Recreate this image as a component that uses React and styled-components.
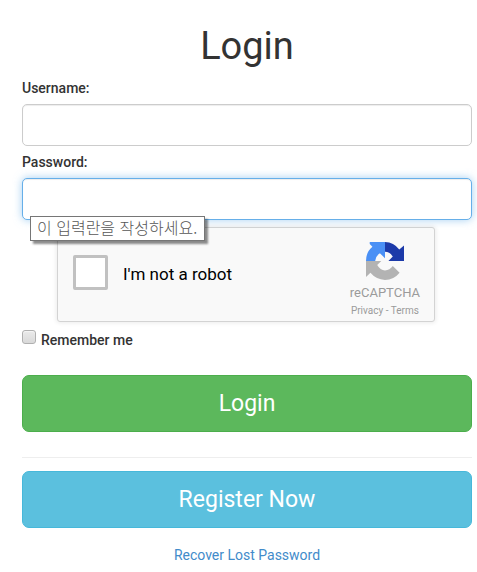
import React from 'react';
import styled, { createGlobalStyle } from 'styled-components';

const GlobalStyle = createGlobalStyle`
    * {
        box-sizing: border-box;
    }
    body {
        margin: 0;
        background-color: #fff;
        color: #333;
        font-family: Roboto, 'Liberation Sans', sans-serif;
        font-size: 14px;
        line-height: 20px;
    }
`
const Form = styled.form`
    padding: 25px 5px 7px 22px;
`
const Title = styled.h1`
    margin: 0 0 11px;
    font-size: 38px;
    font-weight: 400;
    line-height: 42px;
    text-align: center;
`
const Field = styled.div`
    position: relative;
    display: flex;
    flex-direction: column;
    gap: 6px;
    margin-bottom: 6px;
`
const Label = styled.label`
    font-weight: 500;
`
const Input = styled.input`
    width: 100%;
    height: 42px;
    padding: 6px 12px;
    border: 1px solid ${props => props.$active ? '#66afe9' : '#ccc'};
    border-radius: 5px;
    outline: none;
    background-color: #fff;
    font: inherit;
    box-shadow: inset 0 1px 1px rgba(0, 0, 0, 0.075)${props => props.$active ? ', 0 0 8px rgba(102, 175, 233, 0.6)' : ''};
`
const Tooltip = styled.div`
    position: absolute;
    top: 64px;
    left: 8px;
    z-index: 1;
    padding: 0 7px 2px 6px;
    border: 1px solid #767676;
    background-color: #fff;
    color: #575757;
    font-family: 'Noto Sans CJK KR', sans-serif;
    font-size: 16px;
    font-weight: 300;
    line-height: 21px;
    white-space: nowrap;
    box-shadow: 3px 3px 2px rgba(0, 0, 0, 0.45);
`
const Captcha = styled.div`
    display: flex;
    align-items: center;
    max-width: 378px;
    height: 95px;
    margin: 7px 0 8px 35px;
    padding: 0 14px 4px 15px;
    border: 1px solid #d3d3d3;
    border-radius: 3px;
    background-color: #f9f9f9;
    box-shadow: 0 0 4px 1px rgba(0, 0, 0, 0.08);
`
const CaptchaCheck = styled.input`
    appearance: none;
    width: 35px;
    height: 35px;
    margin: 0 15px 0 0;
    border: 3px solid #c1c1c1;
    border-radius: 2px;
    background-color: #fff;
`
const CaptchaLabel = styled.label`
    flex: 1;
    padding-top: 2px;
    color: #000;
    font-size: 17px;
`
const Brand = styled.div`
    display: flex;
    flex-direction: column;
    align-items: center;
    align-self: flex-start;
    padding-top: 14px;
    color: #9b9b9b;
    font-size: 13px;
`
const BrandName = styled.span`
    margin-top: 3px;
`
const Legal = styled.div`
    font-size: 10px;
    line-height: 16px;
`
const LegalLink = styled.a`
    color: inherit;
    text-decoration: none;
`
const Remember = styled.div`
    display: flex;
    align-items: flex-start;
    gap: 5px;
    margin-bottom: 25px;
`
const RememberCheck = styled.input`
    appearance: none;
    width: 14px;
    height: 14px;
    margin: 0;
    border: 1px solid #b0b0b0;
    border-radius: 3px;
    background-image: linear-gradient(#eaeaea, #d9d9d9);
    box-shadow: inset 0 1px 1px #f6f6f6;
`
const Button = styled.button`
    display: block;
    width: 100%;
    padding: 12px 16px;
    border: 1px solid ${props => props.$info ? '#46b8da' : '#4cae4c'};
    border-radius: 7px;
    background-color: ${props => props.$info ? '#5bc0de' : '#5cb85c'};
    color: #fff;
    font-family: inherit;
    font-size: 23px;
    line-height: 31px;
    cursor: pointer;
`
const Divider = styled.hr`
    margin: 25px 0 13px;
    border: 0;
    border-top: 1px solid #eee;
`
const Recover = styled.div`
    margin-top: 17px;
    text-align: center;
`
const RecoverLink = styled.a`
    color: #428bca;
    text-decoration: none;
`

const CaptchaLogo = () => (
    <svg width='38' height='38' viewBox='0 0 112 112' aria-hidden='true'>
        <path fill='#4a90f5' d='M11 0H56V48L41 33Q29 40 27 56H0Q0 29 19 14L11 6Z' />
        <path fill='#1c3aa9' d='M56 0Q82 1 98 22L112 10V56H66L79 43Q70 29 56 29Z' />
        <path fill='#b3b3b3' d='M0 56H45L33 68Q42 83 56 84Q70 83 79 71L99 91Q82 112 56 112Q30 111 13 91L0 103Z' />
    </svg>
)

const App = () => {
    return (
        <>
            <GlobalStyle />
            <Form onSubmit={e => e.preventDefault()}>
                <Title>Login</Title>
                <Field>
                    <Label htmlFor='username'>Username:</Label>
                    <Input id='username' type='text' />
                </Field>
                <Field>
                    <Label htmlFor='password'>Password:</Label>
                    <Input id='password' type='password' aria-describedby='password-hint' $active />
                    <Tooltip id='password-hint' role='tooltip' lang='ko'>이 입력란을 작성하세요.</Tooltip>
                </Field>
                <Captcha>
                    <CaptchaCheck id='robot' type='checkbox' />
                    <CaptchaLabel htmlFor='robot'>I'm not a robot</CaptchaLabel>
                    <Brand>
                        <CaptchaLogo />
                        <BrandName>reCAPTCHA</BrandName>
                        <Legal>
                            <LegalLink href='#'>Privacy</LegalLink> - <LegalLink href='#'>Terms</LegalLink>
                        </Legal>
                    </Brand>
                </Captcha>
                <Remember>
                    <RememberCheck id='remember' type='checkbox' />
                    <Label htmlFor='remember'>Remember me</Label>
                </Remember>
                <Button type='submit'>Login</Button>
                <Divider />
                <Button type='button' $info>Register Now</Button>
                <Recover>
                    <RecoverLink href='#'>Recover Lost Password</RecoverLink>
                </Recover>
            </Form>
        </>
    )
}

export default App;
